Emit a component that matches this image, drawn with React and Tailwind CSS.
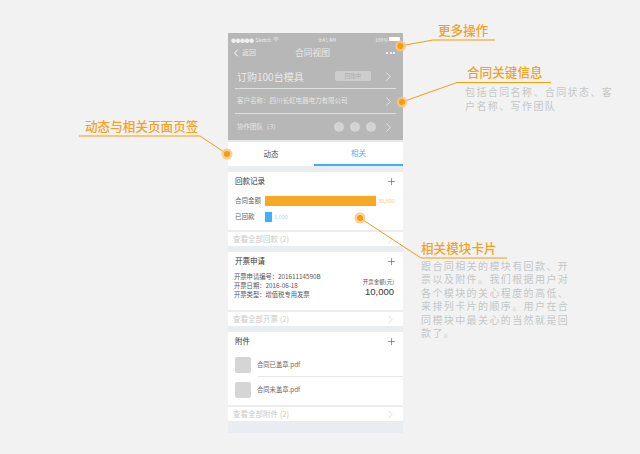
import React from 'react';
import { ChevronLeft, ChevronRight, Plus, Wifi } from 'lucide-react';

const font = "font-['Noto_Sans_CJK_SC','Liberation_Sans',sans-serif]";

// "view all" footer row at the bottom of every card
const MoreRow = ({ label }) => (
  <div className="h-[14px] bg-white border-t-2 border-[#ececec] flex items-center justify-between pl-[5px] pr-[6px] box-content">
    <span className="text-[7.5px] leading-none text-[#c9c9c9]">{label}</span>
    <ChevronRight size={13} strokeWidth={1} className="text-[#c4c4c4]" />
  </div>
);

const CardTitle = ({ children }) => (
  <div className="h-[18px] flex items-center justify-between pl-[7px] pr-[6px]">
    <span className="text-[7.5px] leading-none text-[#333]">{children}</span>
    <Plus size={11} strokeWidth={1.2} className="text-[#444]" />
  </div>
);

const Note = ({ className, title, children }) => (
  <div className={`absolute ${className}`}>
    <div className="text-[12.6px] leading-[16px] font-medium text-[#f5a11c] whitespace-nowrap">{title}</div>
    {children}
  </div>
);

const Dot = ({ x, y }) => (
  <g>
    <circle cx={x} cy={y} r="5.5" fill="#f9c57a" opacity="0.8" />
    <circle cx={x} cy={y} r="3" fill="#f59c0f" />
  </g>
);

export default function App() {
  return (
    <div className={`relative w-[640px] h-[454px] overflow-hidden bg-[#f2f2f2] pl-[228px] pt-[33px] ${font}`}>
      {/* phone screen */}
      <div className="w-[175px] h-[400px] bg-[#e9ecf0] flex flex-col">
        <div className="h-[107px] bg-[#b7b7b7] text-white flex flex-col">
          <div className="h-[12px] flex items-center justify-between px-[3px] text-[5px] leading-none text-[#eee]">
            <span className="flex items-center gap-[2px]">
              <span className="tracking-[-0.5px]">●●●●●</span> Sketch <Wifi size={6} strokeWidth={2.5} />
            </span>
            <span>9:41 AM</span>
            <span className="flex items-center gap-[1px]">
              100% <span className="w-[11px] h-[4px] bg-white rounded-[1px]" />
            </span>
          </div>
          <div className="h-[15px] flex items-center pl-[2px] pr-[8px]">
            <span className="flex-1 flex items-center text-[7px] text-[#e8e8e8]">
              <ChevronLeft size={12} strokeWidth={2} className="text-white" />返回
            </span>
            <span className="text-[8.75px] text-[#e8e8e8]">合同视图</span>
            <span className="flex-1 flex justify-end gap-[1.5px]">
              <span className="w-[2px] h-[2px] bg-white rounded-full" />
              <span className="w-[2px] h-[2px] bg-white rounded-full" />
              <span className="w-[2px] h-[2px] bg-white rounded-full" />
            </span>
          </div>
          <div className="mx-[7px] h-[29px] pt-[4px] border-b border-[#dedede] flex items-center justify-between">
            <span className="text-[10px] pl-[2px] text-[#e9e9e9]">订购100台模具</span>
            <span className="flex items-center gap-[10px]">
              <span className="w-[36px] h-[10px] rounded-[2px] bg-[#cdcdcd] text-[5.5px] leading-[10px] text-center text-[#aaa]">回款中</span>
              <ChevronRight size={15} strokeWidth={1} />
            </span>
          </div>
          <div className="mx-[7px] h-[25px] border-b border-[#dedede] flex items-center justify-between">
            <span className="text-[6.5px] pl-[2px] text-[#e6e6e6]">客户名称：四川长虹电器电力有限公司</span>
            <ChevronRight size={15} strokeWidth={1} />
          </div>
          <div className="mx-[7px] flex-1 flex items-center justify-between">
            <span className="text-[6.5px] pl-[2px] text-[#e6e6e6]">协作团队（3）</span>
            <span className="flex items-center gap-[5px]">
              <span className="w-[10px] h-[10px] rounded-full bg-[#d4d4d4]" />
              <span className="w-[10px] h-[10px] rounded-full bg-[#d4d4d4] ml-[1px]" />
              <span className="w-[10px] h-[10px] rounded-full bg-[#d4d4d4] ml-[1px]" />
              <ChevronRight size={15} strokeWidth={1} />
            </span>
          </div>
        </div>
        <div className="h-[2px] bg-[#e8e8e8]" />

        {/* tabs */}
        <div className="h-[24px] bg-white flex text-[7.5px]">
          <div className="w-[86px] flex items-center justify-center text-[#555]">动态</div>
          <div className="flex-1 flex items-center justify-center text-[#4ab4f5] border-b-2 border-[#3fb0f5]">相关</div>
        </div>

        {/* 回款记录 */}
        <div className="mt-[6px] bg-white">
          <CardTitle>回款记录</CardTitle>
          <div className="pl-[7px] pt-[6px] h-[40px] text-[6.5px] text-[#666]">
            <div className="flex items-center h-[10px]">
              <span className="w-[30px]">合同金额</span>
              <span className="w-[111px] h-[10px] bg-[#f9a825]" />
              <span className="ml-[2px] text-[5.5px] text-[#fbc873]">30,000</span>
            </div>
            <div className="flex items-center h-[10px] mt-[6px]">
              <span className="w-[30px]">已回款</span>
              <span className="w-[7px] h-[10px] bg-[#40b0f8]" />
              <span className="ml-[2px] text-[5.5px] text-[#a5d9fb]">3,000</span>
            </div>
          </div>
          <MoreRow label="查看全部回款 (2)" />
        </div>

        {/* 开票申请 */}
        <div className="mt-[6px] bg-white">
          <CardTitle>开票申请</CardTitle>
          <div className="h-[40px] pl-[6px] pr-[9px] flex justify-between text-[6.3px] text-[#555]">
            <div className="pt-[3px] leading-[8.5px]">
              <div>开票申请编号：20161114590B</div>
              <div>开票日期：2016-06-18</div>
              <div className="mt-[1px]">开票类型：增值税专用发票</div>
            </div>
            <div className="pt-[8px] text-right">
              <div className="text-[5.5px] leading-[8px]">开票金额(元)</div>
              <div className="text-[9.5px] leading-[12px] text-[#333] font-['Liberation_Sans']">10,000</div>
            </div>
          </div>
          <MoreRow label="查看全部开票 (2)" />
        </div>

        {/* 附件 */}
        <div className="mt-[6px] bg-white">
          <CardTitle>附件</CardTitle>
          <div className="pl-[7px] h-[55px] text-[6.3px] text-[#666]">
            <div className="flex items-center gap-[6px] h-[25px] pt-[5px]">
              <span className="w-[16px] h-[16px] rounded-[2px] bg-[#d5d5d5]" />
              合同已盖章.pdf
            </div>
            <div className="ml-[23px] border-t border-[#e6e6e6] mt-[1px]" />
            <div className="flex items-center gap-[6px] h-[25px]">
              <span className="w-[16px] h-[16px] rounded-[2px] bg-[#d5d5d5] mt-[1px]" />
              合同未盖章.pdf
            </div>
          </div>
          <MoreRow label="查看全部附件 (2)" />
        </div>
      </div>

      {/* leader lines drawn over the screen */}
      <svg className="absolute left-0 top-0" width="640" height="454" fill="none">
        <g stroke="#f59c0f" strokeWidth="1">
          <path d="M400 46 L433 40 H495" />
          <path d="M402 102 L457 82.5 H551" />
          <path d="M79 136 H200 L227 154" />
          <path d="M360 218 L421 258 H507" />
        </g>
        <Dot x={400.5} y={46} />
        <Dot x={402} y={102} />
        <Dot x={227} y={154} />
        <Dot x={360} y={218} />
      </svg>

      <Note className="left-[438px] top-[22px]" title="更多操作" />
      <Note className="left-[467px] top-[64px]" title="合同关键信息">
        <p className="w-[156px] ml-[-2px] mt-[5px] text-[10px] leading-[13.5px] tracking-[1.4px] text-[#c3c7c7]">
          包括合同名称、合同状态、客户名称、写作团队
        </p>
      </Note>
      <Note className="left-[85px] top-[118px]" title="动态与相关页面页签" />
      <Note className="left-[421px] top-[240px]" title="相关模块卡片">
        <p className="w-[152px] mt-[3px] text-[10px] leading-[13.4px] tracking-[1.4px] text-[#c3c7c7]">
          跟合同相关的模块有回款、开票以及附件。我们根据用户对各个模块的关心程度的高低、来排列卡片的顺序。用户在合同模块中最关心的当然就是回款了。
        </p>
      </Note>
    </div>
  );
}
